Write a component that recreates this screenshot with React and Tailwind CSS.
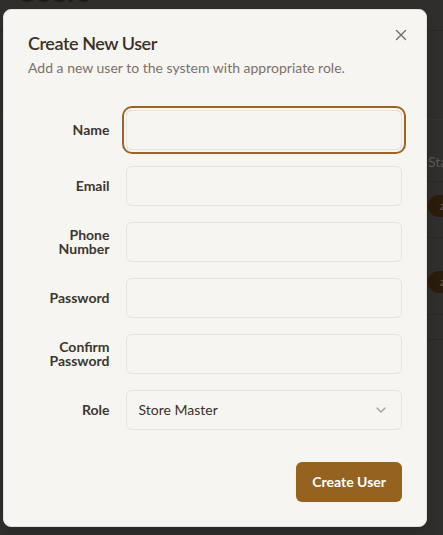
import React from "react";

const font = { fontFamily: 'Lato, "Open Sans", sans-serif' };

function Row({ label, children }) {
  return (
    <div className="grid grid-cols-4 items-center gap-4">
      <label className="text-right text-sm font-bold leading-none text-[#3d3530]">{label}</label>
      {children}
    </div>
  );
}

function Input({ focused }) {
  return (
    <input
      className={
        "col-span-3 h-10 w-full rounded-md border border-[#e8e3dc] bg-transparent px-3 text-sm outline-none " +
        (focused ? "ring-2 ring-[#9a6424] ring-offset-2 ring-offset-[#f7f5f1]" : "")
      }
    />
  );
}

export default function App() {
  return (
    <div className="relative h-[535px] w-[443px] overflow-hidden bg-[#2f2e2c]" style={font}>
      {/* page behind */}
      <div className="flex flex-col">
        <div className="-mt-[26px] h-[57px] border-b border-[#282725] px-4 text-[30px] font-bold leading-[32px] text-[#1c1b1a]">Users</div>
        <div className="h-[89px] border-b border-[#343331]"></div>
        <div className="flex h-[62px] items-center border-b border-[#282725] pl-[428px] pt-[22px] text-sm text-[#5a5752]">Status</div>
        <div className="flex h-[56px] items-center border-b border-[#282725] pb-[8px] pl-[428px]">
          <span className="rounded-full bg-[#2a1c0c] px-3 py-[3px] text-xs text-[#6b5f52]">active</span>
        </div>
        <div className="flex h-[77px] items-center border-b border-[#282725] pl-[428px] pt-[12px]">
          <span className="rounded-full bg-[#2a1c0c] px-3 py-[3px] text-xs text-[#6b5f52]">active</span>
        </div>
        <div className="h-[25px] border-b border-[#282725]"></div>
      </div>

      {/* dialog */}
      <div className="absolute left-[3px] top-[9px] grid w-[424px] gap-4 rounded-lg border border-[#e4e0d9] bg-[#f7f5f1] p-6 shadow-lg">
        <div className="flex flex-col gap-1.5">
          <h2 className="text-lg font-semibold leading-none tracking-tight text-[#3b302a]">Create New User</h2>
          <p className="text-sm text-[#7b716a]">Add a new user to the system with appropriate role.</p>
        </div>
        <button className="absolute right-[16px] top-[16px] text-[#6e6862]">
          <svg width="18" height="18" viewBox="0 0 24 24" fill="none" stroke="currentColor" strokeWidth="1.6" strokeLinecap="round" strokeLinejoin="round">
            <path d="M18 6 6 18" />
            <path d="m6 6 12 12" />
          </svg>
        </button>
        <div className="grid gap-4 py-4">
          <Row label="Name"><Input focused /></Row>
          <Row label="Email"><Input /></Row>
          <Row label="Phone Number"><Input /></Row>
          <Row label="Password"><Input /></Row>
          <Row label="Confirm Password"><Input /></Row>
          <Row label="Role">
            <div className="col-span-3 flex h-10 items-center justify-between rounded-md border border-[#e8e3dc] px-3 text-sm text-[#3b302a]">
              <span>Store Master</span>
              <svg width="16" height="16" viewBox="0 0 24 24" fill="none" stroke="#a39d96" strokeWidth="2" strokeLinecap="round" strokeLinejoin="round">
                <path d="m6 9 6 6 6-6" />
              </svg>
            </div>
          </Row>
        </div>
        <div className="flex justify-end">
          <button className="h-10 rounded-md bg-[#95621f] px-4 text-sm font-bold text-white">Create User</button>
        </div>
      </div>
    </div>
  );
}
